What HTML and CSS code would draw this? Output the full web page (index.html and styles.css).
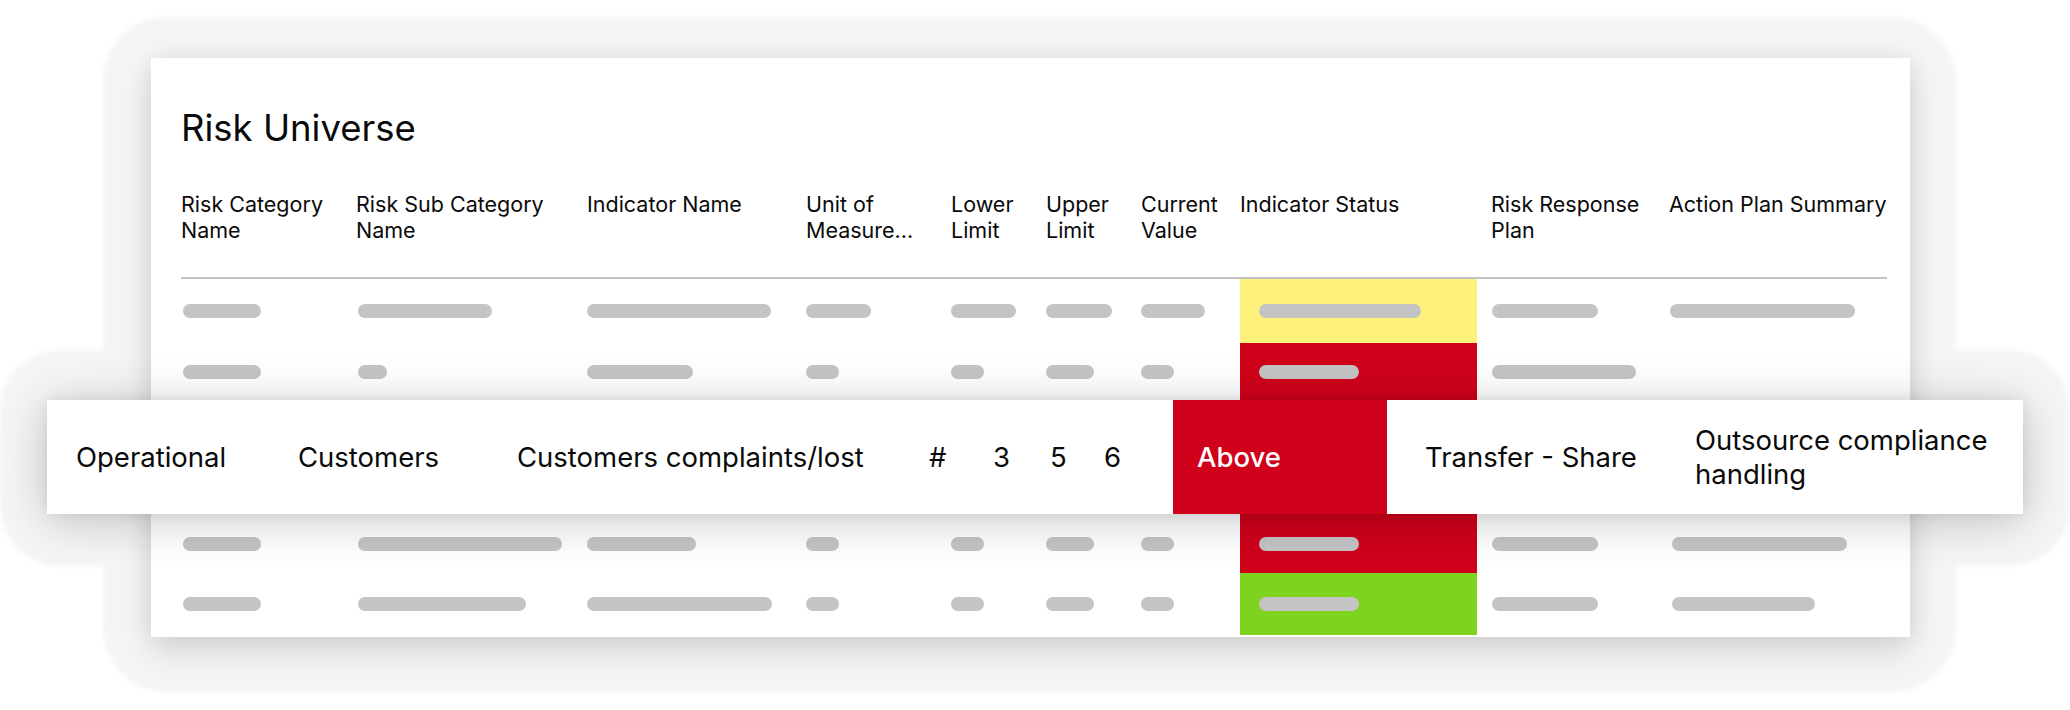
FILE: index.html
```html
<!DOCTYPE html>
<html lang="en">
<head>
<meta charset="utf-8">
<title>Risk Universe</title>
<link rel="stylesheet" href="styles.css">
</head>
<body>
<main class="stage">
  <section class="card">
    <h1 class="title">Risk Universe</h1>

    <div class="row head">
      <div class="cell">Risk Category<br>Name</div>
      <div class="cell">Risk Sub Category<br>Name</div>
      <div class="cell">Indicator Name</div>
      <div class="cell">Unit of<br>Measure...</div>
      <div class="cell">Lower<br>Limit</div>
      <div class="cell">Upper<br>Limit</div>
      <div class="cell">Current<br>Value</div>
      <div class="cell">Indicator Status</div>
      <div class="cell c9">Risk Response<br>Plan</div>
      <div class="cell c10">Action Plan Summary</div>
    </div>

    <div class="row body r1">
      <div class="cell c1"><span class="bar" style="width:78px"></span></div>
      <div class="cell c2"><span class="bar" style="width:134px"></span></div>
      <div class="cell"><span class="bar" style="width:184px"></span></div>
      <div class="cell"><span class="bar" style="width:65px"></span></div>
      <div class="cell"><span class="bar" style="width:65px"></span></div>
      <div class="cell"><span class="bar" style="width:66px"></span></div>
      <div class="cell"><span class="bar" style="width:64px"></span></div>
      <div class="cell status yellow"><span class="bar" style="width:162px"></span></div>
      <div class="cell c9"><span class="bar" style="width:106px"></span></div>
      <div class="cell c10"><span class="bar" style="width:185px"></span></div>
    </div>

    <div class="row body r2">
      <div class="cell c1"><span class="bar" style="width:78px"></span></div>
      <div class="cell c2"><span class="bar" style="width:29px"></span></div>
      <div class="cell"><span class="bar" style="width:106px"></span></div>
      <div class="cell"><span class="bar" style="width:33px"></span></div>
      <div class="cell"><span class="bar" style="width:33px"></span></div>
      <div class="cell"><span class="bar" style="width:48px"></span></div>
      <div class="cell"><span class="bar" style="width:33px"></span></div>
      <div class="cell status red"><span class="bar" style="width:100px"></span></div>
      <div class="cell c9"><span class="bar" style="width:144px"></span></div>
      <div class="cell c10"></div>
    </div>

    <div class="popout">
      <div class="pcell">Operational</div>
      <div class="pcell">Customers</div>
      <div class="pcell">Customers complaints/lost</div>
      <div class="pcell">#</div>
      <div class="pcell">3</div>
      <div class="pcell">5</div>
      <div class="pcell">6</div>
      <div class="pcell above">Above</div>
      <div class="pcell response">Transfer - Share</div>
      <div class="pcell plan">Outsource compliance<br>handling</div>
    </div>

    <div class="row body r4">
      <div class="cell c1"><span class="bar" style="width:78px"></span></div>
      <div class="cell c2"><span class="bar" style="width:204px"></span></div>
      <div class="cell"><span class="bar" style="width:109px"></span></div>
      <div class="cell"><span class="bar" style="width:33px"></span></div>
      <div class="cell"><span class="bar" style="width:33px"></span></div>
      <div class="cell"><span class="bar" style="width:48px"></span></div>
      <div class="cell"><span class="bar" style="width:33px"></span></div>
      <div class="cell status red"><span class="bar" style="width:100px"></span></div>
      <div class="cell c9"><span class="bar" style="width:106px"></span></div>
      <div class="cell c10 shift"><span class="bar" style="width:175px"></span></div>
    </div>

    <div class="row body r5">
      <div class="cell c1"><span class="bar" style="width:78px"></span></div>
      <div class="cell c2"><span class="bar" style="width:168px"></span></div>
      <div class="cell"><span class="bar" style="width:185px"></span></div>
      <div class="cell"><span class="bar" style="width:33px"></span></div>
      <div class="cell"><span class="bar" style="width:33px"></span></div>
      <div class="cell"><span class="bar" style="width:48px"></span></div>
      <div class="cell"><span class="bar" style="width:33px"></span></div>
      <div class="cell status green"><span class="bar" style="width:100px"></span></div>
      <div class="cell c9"><span class="bar" style="width:106px"></span></div>
      <div class="cell c10 shift"><span class="bar" style="width:143px"></span></div>
    </div>
  </section>
</main>
</body>
</html>
```

FILE: styles.css
```css
html {
  background: #ffffff;
}

body {
  margin: 0;
  font-family: Inter, "Noto Sans", sans-serif;
  color: #0a0a0a;
  overflow: hidden;
}

.stage {
  width: 2070px;
  height: 710px;
  box-sizing: border-box;
  padding: 58px 0 0 151px;
}

/* main card */
.card {
  position: relative;
  width: 1759px;
  box-sizing: border-box;
  padding: 48px 23px 2px 30px;
  background: #ffffff;
  box-shadow: 0 14px 34px rgba(0, 0, 0, 0.13), 0 0 22px rgba(0, 0, 0, 0.07);
}

/* soft halo behind the card */
.card::before {
  content: "";
  position: absolute;
  left: -48px;
  top: -41px;
  right: -46px;
  bottom: -55px;
  border-radius: 64px;
  background: #f5f5f5;
  filter: blur(2px);
  z-index: -1;
}

.title {
  margin: 0;
  font-size: 36.5px;
  line-height: 44px;
  font-weight: 400;
}

/* table rows */
.row {
  display: grid;
  grid-template-columns: 175px 231px 219px 145px 95px 95px 99px 237px 192px 218px;
}

.head {
  margin-top: 41px;
  padding-bottom: 34px;
  border-bottom: 2px solid #c2c2c2;
  font-size: 21.5px;
  line-height: 26px;
}

.head .cell {
  display: block;
}

.cell {
  display: flex;
  align-items: center;
}

.c1,
.c2 {
  padding-left: 2px;
}

.c9 {
  padding-left: 14px;
}

.body .c9 {
  padding-left: 15px;
}

.body .c10 {
  padding-left: 1px;
}

.body .c10.shift {
  padding-left: 3px;
}

.r1 { height: 64px; }
.r2 { height: 57px; }
.r4 { height: 59px; }
.r5 { height: 62px; }

.bar {
  display: block;
  height: 14px;
  border-radius: 7px;
  background: #c4c4c4;
}

.status {
  padding-left: 19px;
}

.yellow { background: #fff27b; }
.red { background: #d0021b; }
.green { background: #7ed321; }

/* highlighted, enlarged row */
.popout {
  position: relative;
  margin-left: -134px;
  width: 1976px;
  height: 114px;
  box-sizing: border-box;
  padding-left: 29px;
  background: #ffffff;
  display: grid;
  grid-template-columns: 222px 219px 412px 64px 57px 54px 69px 214px 308px 328px;
  font-size: 27.5px;
  line-height: 34px;
  box-shadow: 0 6px 48px rgba(0, 0, 0, 0.22), 0 0 12px rgba(0, 0, 0, 0.07);
}

/* soft halo behind the popout row */
.popout::before {
  content: "";
  position: absolute;
  left: -47px;
  right: -47px;
  top: -50px;
  bottom: -52px;
  border-radius: 60px;
  background: #f5f5f5;
  filter: blur(2px);
  z-index: -1;
}

.pcell {
  display: flex;
  align-items: center;
  white-space: nowrap;
}

.above {
  background: #d0021b;
  color: #ffffff;
  padding-left: 24px;
  font-weight: 500;
}

.response {
  padding-left: 38px;
}

.plan {
  white-space: normal;
}
```
